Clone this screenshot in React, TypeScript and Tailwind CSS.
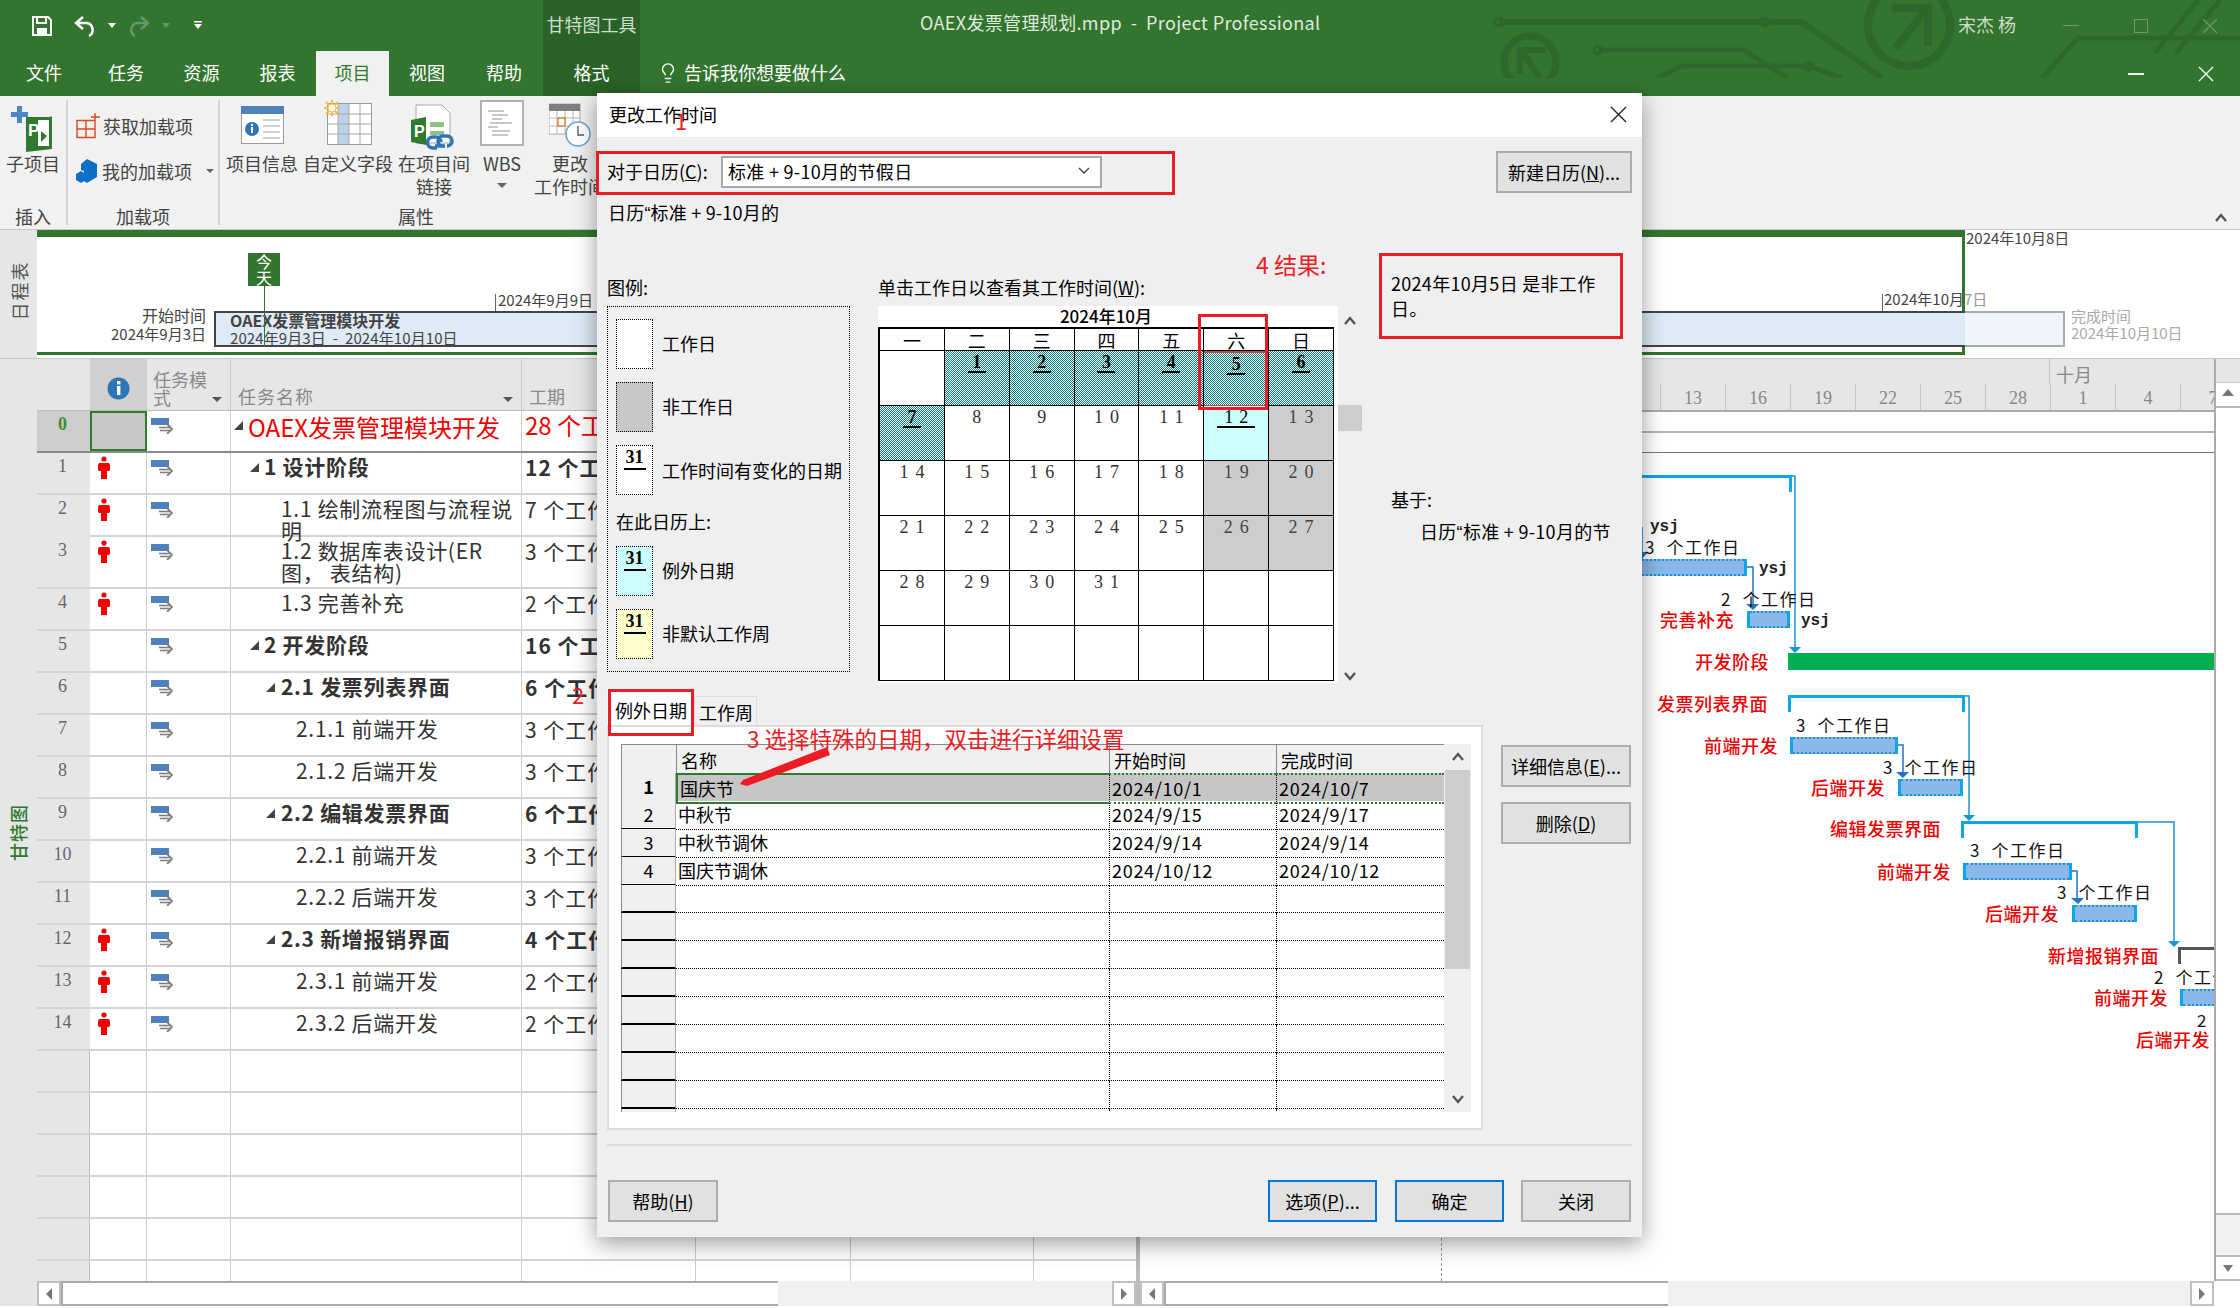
import type { ReactNode } from "react"
import { Lightbulb } from "lucide-react"

const tabs = [
  { label: "文件", cls: "w-[88px]" },
  { label: "任务", cls: "w-[76px]" },
  { label: "资源", cls: "w-[75px]" },
  { label: "报表", cls: "w-[77px]" },
  { label: "项目", cls: "w-[73px] bg-[#f1f1f1] text-[#2f7a2f]" },
  { label: "视图", cls: "w-[76px]" },
  { label: "帮助", cls: "w-[78px]" },
  { label: "格式", cls: "w-[97px] bg-[#2a6328]" },
]

const tasks = [
  { n: "0", name: ["OAEX发票管理模块开发"], dur: "28 个工作日", ind: "pl-[17px]", tri: "left-[3px]", kind: "root", res: false, h: "h-[42px]" },
  { n: "1", name: ["1 设计阶段"], dur: "12 个工作日", ind: "pl-[33px]", tri: "left-[19px]", kind: "bold", res: true, h: "h-[42px]" },
  { n: "2", name: ["1.1 绘制流程图与流程说", "明"], dur: "7 个工作日", ind: "pl-[50px]", kind: "", res: true, h: "h-[42px]" },
  { n: "3", name: ["1.2 数据库表设计(ER", "图\uFF0C 表结构)"], dur: "3 个工作日", ind: "pl-[50px]", kind: "", res: true, h: "h-[52px]" },
  { n: "4", name: ["1.3 完善补充"], dur: "2 个工作日", ind: "pl-[50px]", kind: "", res: true, h: "h-[42px]" },
  { n: "5", name: ["2 开发阶段"], dur: "16 个工作日", ind: "pl-[33px]", tri: "left-[19px]", kind: "bold", res: false, h: "h-[42px]" },
  { n: "6", name: ["2.1 发票列表界面"], dur: "6 个工作日", ind: "pl-[50px]", tri: "left-[35px]", kind: "bold", res: false, h: "h-[42px]" },
  { n: "7", name: ["2.1.1 前端开发"], dur: "3 个工作日", ind: "pl-[65px]", kind: "", res: false, h: "h-[42px]" },
  { n: "8", name: ["2.1.2 后端开发"], dur: "3 个工作日", ind: "pl-[65px]", kind: "", res: false, h: "h-[42px]" },
  { n: "9", name: ["2.2 编辑发票界面"], dur: "6 个工作日", ind: "pl-[50px]", tri: "left-[35px]", kind: "bold", res: false, h: "h-[42px]" },
  { n: "10", name: ["2.2.1 前端开发"], dur: "3 个工作日", ind: "pl-[65px]", kind: "", res: false, h: "h-[42px]" },
  { n: "11", name: ["2.2.2 后端开发"], dur: "3 个工作日", ind: "pl-[65px]", kind: "", res: false, h: "h-[42px]" },
  { n: "12", name: ["2.3 新增报销界面"], dur: "4 个工作日", ind: "pl-[50px]", tri: "left-[35px]", kind: "bold", res: true, h: "h-[42px]" },
  { n: "13", name: ["2.3.1 前端开发"], dur: "2 个工作日", ind: "pl-[65px]", kind: "", res: true, h: "h-[42px]" },
  { n: "14", name: ["2.3.2 后端开发"], dur: "2 个工作日", ind: "pl-[65px]", kind: "", res: true, h: "h-[42px]" },
]

const rowGrid = "grid grid-cols-[53px_57px_84px_291px_174px_155px_183px_102px]"

// gantt canvas, page coordinates minus the pane origin (1140, 359)
const OX = 1140
const OY = 359

const taskBars = [
  { x: 1642, y: 559, w: 105, r: true },
  { x: 1747, y: 611, w: 43, l: true, r: true },
  { x: 1790, y: 737, w: 108, l: true, r: true },
  { x: 1898, y: 779, w: 65, l: true, r: true },
  { x: 1963, y: 863, w: 109, l: true, r: true },
  { x: 2072, y: 905, w: 65, l: true, r: true },
  { x: 2180, y: 989, w: 34, l: true },
]

const summaries = [
  { x: 1642, y: 475, w: 150, dark: false, noLeft: true },
  { x: 1788, y: 695, w: 177, dark: false },
  { x: 1961, y: 821, w: 177, dark: false },
  { x: 2178, y: 947, w: 36, dark: true, noRight: true },
]

const redLabels = [
  { t: "完善补充", x: 1660, y: 619 },
  { t: "开发阶段", x: 1695, y: 661 },
  { t: "发票列表界面", x: 1657, y: 703 },
  { t: "前端开发", x: 1704, y: 745 },
  { t: "后端开发", x: 1811, y: 787 },
  { t: "编辑发票界面", x: 1830, y: 828 },
  { t: "前端开发", x: 1877, y: 871 },
  { t: "后端开发", x: 1985, y: 913 },
  { t: "新增报销界面", x: 2048, y: 955 },
  { t: "前端开发", x: 2094, y: 997 },
  { t: "后端开发", x: 2136, y: 1039 },
]

const blackLabels = [
  { t: "3  个工作日", x: 1645, y: 547 },
  { t: "2  个工作日", x: 1721, y: 599 },
  { t: "3  个工作日", x: 1796, y: 725 },
  { t: "3  个工作日", x: 1883, y: 767 },
  { t: "3  个工作日", x: 1970, y: 850 },
  { t: "3  个工作日", x: 2057, y: 892 },
  { t: "2  个工作日", x: 2154, y: 977 },
  { t: "2", x: 2197, y: 1020 },
]

const ysj = [
  { x: 1650, y: 527 },
  { x: 1759, y: 569 },
  { x: 1801, y: 621 },
]

const exceptions = [
  ["1", "国庆节", "2024/10/1", "2024/10/7"],
  ["2", "中秋节", "2024/9/15", "2024/9/17"],
  ["3", "中秋节调休", "2024/9/14", "2024/9/14"],
  ["4", "国庆节调休", "2024/10/12", "2024/10/12"],
  ["", "", "", ""],
  ["", "", "", ""],
  ["", "", "", ""],
  ["", "", "", ""],
  ["", "", "", ""],
  ["", "", "", ""],
  ["", "", "", ""],
  ["", "", "", ""],
  ["", "", "", ""],
]

type Day = { d: string; kind?: "exc" | "off" | "light" | "sel" }

const calendar: Day[] = [
  { d: "" },
  { d: "1", kind: "exc" }, { d: "2", kind: "exc" }, { d: "3", kind: "exc" }, { d: "4", kind: "exc" }, { d: "5", kind: "sel" }, { d: "6", kind: "exc" },
  { d: "7", kind: "exc" }, { d: "8" }, { d: "9" }, { d: "10" }, { d: "11" }, { d: "12", kind: "light" }, { d: "13", kind: "off" },
  { d: "14" }, { d: "15" }, { d: "16" }, { d: "17" }, { d: "18" }, { d: "19", kind: "off" }, { d: "20", kind: "off" },
  { d: "21" }, { d: "22" }, { d: "23" }, { d: "24" }, { d: "25" }, { d: "26", kind: "off" }, { d: "27", kind: "off" },
  { d: "28" }, { d: "29" }, { d: "30" }, { d: "31" }, { d: "" }, { d: "" }, { d: "" },
  { d: "" }, { d: "" }, { d: "" }, { d: "" }, { d: "" }, { d: "" }, { d: "" },
]

const teal = "bg-[image:repeating-conic-gradient(#008080_0%_25%,#ffffff_0%_50%)] bg-[length:2px_2px]"

function Person() {
  return (
    <svg width="12" height="24" viewBox="0 0 12 24" className="ml-[8px] mt-[3px]">
      <circle cx="6" cy="3" r="2.6" fill="#f00000" />
      <path d="M1 7h10l1 2v5l-1 1H9v8H3v-8H1l-1-1V9z" fill="#f00000" />
    </svg>
  )
}

function ModeIcon() {
  return (
    <svg width="22" height="16" viewBox="0 0 22 16" className="ml-[4px] mt-[7px]">
      <rect x="0" y="0" width="18" height="7" fill="#4f81bd" />
      <path d="M8 9.5h11" stroke="#7f7f7f" strokeWidth="1.6" />
      <path d="M9 12.5h10" stroke="#7f7f7f" strokeWidth="1.6" />
      <path d="M16 6l5 5-5 5" fill="none" stroke="#7f7f7f" strokeWidth="1.8" />
    </svg>
  )
}

function Btn({ children, cls }: { children: ReactNode; cls: string }) {
  return <div className={`flex items-center justify-center h-[42px] bg-[#e1e1e1] border-2 text-[18px] text-black ${cls}`}>{children}</div>
}

function Chevron({ down }: { down?: boolean }) {
  return (
    <svg width="14" height="10" viewBox="0 0 14 10" className="shrink-0">
      <path d={down ? "M2 2l5 6 5-6" : "M2 8l5-6 5 6"} fill="none" stroke="#555" strokeWidth="2.4" />
    </svg>
  )
}

function Swatch({ cls, num }: { cls: string; num?: boolean }) {
  return (
    <div className={`w-[37px] h-[50px] shrink-0 border border-dotted border-black flex justify-center ${cls}`}>
      {num && <span className="h-[24px] leading-[23px] px-[2px] border-b-2 border-black font-['Liberation_Serif',serif] font-bold text-[18px] text-black">31</span>}
    </div>
  )
}

function TitleBar() {
  return (
    <div className="relative shrink-0 h-[96px] bg-[#33752f] text-white">
      <svg width="2240" height="78" viewBox="0 0 2240 78" className="absolute left-0 top-0" fill="none" stroke="#2c682a">
        <path d="M1499 22H1802L1882 78" strokeWidth="6" />
        <circle cx="1499" cy="22" r="4" strokeWidth="3" />
        <circle cx="1765" cy="22" r="4" strokeWidth="3" />
        <circle cx="1909" cy="25" r="41" strokeWidth="8" />
        <path d="M1892 8H1928V46M1926 10L1896 48" strokeWidth="8" />
        <circle cx="1530" cy="62" r="26" strokeWidth="7" />
        <path d="M1546 50H1520V74M1522 52L1540 78" strokeWidth="6" />
        <path d="M1598 50H1744L1787 78" strokeWidth="5" />
        <circle cx="1598" cy="50" r="4" strokeWidth="3" />
        <path d="M1656 78L1682 66H1809L1842 78" strokeWidth="5" />
        <circle cx="1809" cy="66" r="4" strokeWidth="3" />
        <path d="M2042 78L2078 38H2240" strokeWidth="5" />
        <path d="M2155 53L2198 0M2176 53L2220 0" strokeWidth="5" />
      </svg>
      <div className="relative flex h-[51px]">
        <div className="w-[543px] flex items-center pl-[32px]">
          <svg width="20" height="20" viewBox="0 0 20 20" fill="none">
            <path d="M1 1h15l3 3v15H1z" stroke="#fff" strokeWidth="2" />
            <path d="M5 1v6h9V1" stroke="#fff" strokeWidth="2" />
            <rect x="5" y="12" width="10" height="7" fill="#fff" />
          </svg>
          <svg width="22" height="22" viewBox="0 0 22 22" fill="none" className="ml-[22px]">
            <path d="M9 2L2 8l7 6" stroke="#fff" strokeWidth="2.4" />
            <path d="M3 8h10a7 7 0 0 1 2 13" stroke="#fff" strokeWidth="2.4" />
          </svg>
          <svg width="8" height="6" viewBox="0 0 8 6" className="ml-[12px]"><path d="M0 0h8L4 5z" fill="#fff" /></svg>
          <svg width="22" height="22" viewBox="0 0 22 22" fill="none" className="ml-[12px]">
            <path d="M13 2l7 6-7 6" stroke="#64976a" strokeWidth="2.4" />
            <path d="M19 8H9a7 7 0 0 0-2 13" stroke="#64976a" strokeWidth="2.4" />
          </svg>
          <svg width="8" height="6" viewBox="0 0 8 6" className="ml-[12px]"><path d="M0 0h8L4 5z" fill="#64976a" /></svg>
          <svg width="8" height="9" viewBox="0 0 8 9" className="ml-[24px]"><path d="M0 0h8v1.5H0zM0 3h8L4 8z" fill="#fff" /></svg>
        </div>
        <div className="w-[97px] bg-[#2a6328] flex items-center justify-center text-[18px] text-[#cfdccd] pb-[3px]">甘特图工具</div>
        <div className="w-[280px]" />
        <div className="text-[18px] leading-[45px] tracking-[0.35px] text-[#dfe9de] whitespace-pre">OAEX发票管理规划.mpp  -  Project Professional</div>
        <div className="ml-auto mr-[22px] flex items-center">
          <span className="text-[18px] text-[#cfdccd] whitespace-pre pb-[3px]">宋杰 杨</span>
          <span className="ml-[47px] w-[16px] h-px bg-[#6e9b6b]" />
          <span className="ml-[55px] w-[14px] h-[14px] border border-[#6e9b6b]" />
          <svg width="16" height="16" viewBox="0 0 16 16" className="ml-[54px]"><path d="M1 1l14 14M15 1L1 15" stroke="#6e9b6b" strokeWidth="1.2" /></svg>
        </div>
      </div>
      <div className="relative flex h-[45px]">
        {tabs.map((t) => (
          <div key={t.label} className={`flex items-center justify-center text-[18px] pb-[2px] ${t.cls}`}>{t.label}</div>
        ))}
        <div className="ml-[17px] flex items-center text-[18px] gap-[5px] pb-[2px]">
          <Lightbulb size={22} strokeWidth={1.5} />
          告诉我你想要做什么
        </div>
        <div className="ml-auto mr-[26px] flex items-center">
          <span className="w-[16px] h-[2px] bg-[#e8f0e7]" />
          <svg width="16" height="16" viewBox="0 0 16 16" className="ml-[54px]"><path d="M1 1l14 14M15 1L1 15" stroke="#fff" strokeWidth="1.3" /></svg>
        </div>
      </div>
    </div>
  )
}

function RibbonBtn({ cls, icon, lines, caret }: { cls: string; icon: ReactNode; lines: string[]; caret?: boolean }) {
  return (
    <div className={`shrink-0 flex flex-col items-center ${cls}`}>
      <div className="h-[52px] flex items-end justify-center">{icon}</div>
      {lines.map((l) => (
        <div key={l} className="h-[23px] leading-[23px] whitespace-nowrap">{l}</div>
      ))}
      {caret && <svg width="10" height="6" viewBox="0 0 10 6" className="mt-[8px]"><path d="M0 0h10L5 5z" fill="#666" /></svg>}
    </div>
  )
}

function Ribbon() {
  return (
    <div className="shrink-0 h-[134px] bg-[#f1f1f1] border-b border-[#c6c6c6] flex text-[18px] text-[#444]">
      <div className="w-[68px] shrink-0 my-[4px] border-r-2 border-[#d4d4d4] flex flex-col">
        <RibbonBtn
          cls="w-[66px]"
          lines={["子项目"]}
          icon={
            <svg width="44" height="46" viewBox="0 0 44 46">
              <path d="M6 0h5v6h6v5h-6v6H6v-6H0V6h6z" fill="#4a86c8" />
              <path d="M15 11h24a1 1 0 0 1 2 1v31l-26 3z" fill="#2f7a2f" />
              <path d="M27 14h11v26H27z" fill="#fff" />
              <path d="M30 25l6 5-6 6z" fill="#2f7a2f" />
              <text x="17" y="30" fontSize="17" fontWeight="700" fill="#fff" fontFamily="Liberation Sans">P</text>
            </svg>
          }
        />
        <div className="mt-auto h-[24px] leading-[30px] text-center">插入</div>
      </div>
      <div className="w-[152px] shrink-0 my-[4px] border-r-2 border-[#d4d4d4] flex flex-col pl-[8px]">
        <div className="mt-[13px] h-[26px] flex items-center gap-[3px] whitespace-nowrap">
          <svg width="24" height="26" viewBox="0 0 24 26" fill="none" stroke="#d84a1f" strokeWidth="1.4">
            <path d="M1 7.5h18v17H1zM10 7.5v17M1 16h18M19 0v8M15 4h9" />
          </svg>
          获取加载项
        </div>
        <div className="mt-[19px] h-[26px] flex items-center gap-[4px] whitespace-nowrap">
          <svg width="22" height="24" viewBox="0 0 22 24">
            <path d="M11 0l10 5v13l-10 6-3-2V12l-3-1V5z" fill="#0f6fc6" />
            <path d="M5 12l5 3v6l-5 3-5-3v-6z" fill="#0f6fc6" />
          </svg>
          我的加载项
          <svg width="8" height="5" viewBox="0 0 8 5" className="ml-[10px]"><path d="M0 0h8L4 4z" fill="#666" /></svg>
        </div>
        <div className="mt-auto h-[24px] leading-[30px] text-center pr-[8px]">加载项</div>
      </div>
      <div className="w-[392px] shrink-0 my-[4px] flex flex-col">
        <div className="flex">
          <RibbonBtn
            cls="w-[84px]"
            lines={["项目信息"]}
            icon={
              <svg width="43" height="38" viewBox="0 0 43 38" className="mb-[8px]">
                <rect x="0.5" y="0.5" width="42" height="37" fill="#fff" stroke="#9a9a9a" />
                <rect x="0" y="0" width="43" height="8" fill="#4f81bd" />
                <circle cx="11" cy="23" r="7" fill="#2f75b5" />
                <rect x="10" y="21" width="2" height="6" fill="#fff" />
                <rect x="10" y="18" width="2" height="2" fill="#fff" />
                <path d="M22 14h17M22 20h17M22 26h17M22 32h17" stroke="#a0a0a0" />
              </svg>
            }
          />
          <RibbonBtn
            cls="w-[88px]"
            lines={["自定义字段"]}
            icon={
              <svg width="48" height="46" viewBox="0 0 48 46" className="mb-[6px]">
                <rect x="3.5" y="3.5" width="44" height="41" fill="#fff" stroke="#9a9a9a" />
                <rect x="14" y="4" width="11" height="40" fill="#bcd2e8" />
                <path d="M14 4v40M25 4v40M36 4v40M4 14h43M4 24h43M4 34h43" stroke="#a8a8a8" />
                <path d="M8 0v16M0 8h16M2 2l12 12M14 2L2 14" stroke="#f5b948" strokeWidth="2" />
                <circle cx="8" cy="8" r="4" fill="#fff" stroke="#f5b948" />
              </svg>
            }
          />
          <RibbonBtn
            cls="w-[84px]"
            lines={["在项目间", "链接"]}
            icon={
              <svg width="48" height="48" viewBox="0 0 48 48">
                <path d="M6 1h26l8 8v30H6z" fill="#fff" stroke="#a8a8a8" />
                <path d="M1 16l15-3v28L1 38z" fill="#2f7a2f" />
                <text x="4" y="33" fontSize="16" fontWeight="700" fill="#fff" fontFamily="Liberation Sans">P</text>
                <path d="M20 18h14v5H20z" fill="#8fc088" />
                <path d="M20 27h14v4H20z" fill="#8fc088" />
                <path d="M25 42h10M33 42a5 5 0 0 1 0-10h4a5 5 0 0 1 0 10M31 38a5 5 0 0 0-5-5h-3a5 5 0 0 0 0 11h4" fill="none" stroke="#2f75b5" strokeWidth="3.5" />
              </svg>
            }
          />
          <RibbonBtn
            cls="w-[52px]"
            lines={["WBS"]}
            caret
            icon={
              <svg width="44" height="46" viewBox="0 0 44 46" className="mb-[6px]">
                <rect x="1" y="1" width="42" height="44" fill="#fff" stroke="#9a9a9a" strokeWidth="1.5" />
                <path d="M8 11h16M12 15h16M12 19h10M10 23h22M8 27h10M12 31h18M12 35h16" stroke="#b5b5b5" strokeWidth="1.4" />
              </svg>
            }
          />
          <RibbonBtn
            cls="w-[84px]"
            lines={["更改", "工作时间"]}
            icon={
              <svg width="42" height="46" viewBox="0 0 42 46" className="mb-[4px]">
                <rect x="0" y="2" width="31" height="30" fill="#fff" stroke="#a8a8a8" />
                <rect x="0" y="2" width="31" height="7" fill="#7f7f7f" />
                <path d="M8 9v23M16 9v23M24 9v23M0 16h31M0 24h31" stroke="#b5b5b5" />
                <rect x="9" y="16" width="7" height="8" fill="#fff" stroke="#e0762a" strokeWidth="1.3" />
                <circle cx="29" cy="32" r="12" fill="#fff" stroke="#6fa2d8" strokeWidth="1.6" />
                <path d="M29 24v9h6" fill="none" stroke="#555" strokeWidth="1.3" />
              </svg>
            }
          />
        </div>
        <div className="mt-auto h-[24px] leading-[30px] text-center">属性</div>
      </div>
      <div className="ml-auto self-end mb-[6px] mr-[12px]">
        <Chevron />
      </div>
    </div>
  )
}

function TimelineBand() {
  return (
    <div className="shrink-0 h-[129px] flex bg-white border-b border-[#c6c6c6]">
      <div className="w-[37px] shrink-0 bg-[#e6e6e6] flex items-center justify-center pb-[8px]">
        <span className="-rotate-90 whitespace-nowrap text-[18px] text-[#555] tracking-[2px]">日程表</span>
      </div>
      {/* the timeline is a free canvas; its origin is (37, 230) */}
      <div className="relative flex-1 overflow-hidden text-[15px] text-[#444] whitespace-nowrap">
        <div className="absolute left-0 top-0 w-[1928px] h-[125px] border-t-[7px] border-b-[3px] border-r-[3px] border-[#33752f]" />
        <div className="absolute left-[211px] top-[23px] w-[32px] h-[33px] bg-[#33752f] text-white text-[16px] leading-[16px] text-center">
          今<br />天
        </div>
        <div className="absolute left-[169px] top-[76px] text-right leading-[18px] -translate-x-full">
          <span className="text-[16px]">开始时间</span>
          <br />
          2024年9月3日
        </div>
        <div className="absolute left-[177px] top-[81px] w-[1751px] h-[36px] bg-[#deeaf6] border-y-2 border-l-2 border-[#444]" />
        <div className="absolute left-[1928px] top-[81px] w-[100px] h-[36px] bg-[#f0f5fb] border-2 border-l-0 border-[#aaaaaa]" />
        <div className="absolute left-[193px] top-[82px] leading-[17px] whitespace-pre">
          <span className="font-bold text-[16px]">OAEX发票管理模块开发</span>
          <br />
          <span className="tracking-[0.1px]">2024年9月3日  -  2024年10月10日</span>
        </div>
        <div className="absolute left-[227px] top-[56px] w-px h-[61px] bg-[#33752f]" />
        <div className="absolute left-[458px] top-[64px] w-px h-[17px] bg-[#666]" />
        <div className="absolute left-[461px] top-[58px] leading-[24px]">2024年9月9日</div>
        <div className="absolute left-[1845px] top-[64px] w-px h-[17px] bg-[#666]" />
        <div className="absolute left-[1847px] top-[57px] leading-[24px]">
          2024年10月<span className="text-[#999]">7日</span>
        </div>
        <div className="absolute left-[1929px] top-[-4px] leading-[24px]">2024年10月8日</div>
        <div className="absolute left-[2034px] top-[77px] text-[#aaa] leading-[17px]">
          完成时间
          <br />
          2024年10月10日
        </div>
      </div>
    </div>
  )
}

function TaskTable() {
  const empties = [0, 1, 2, 3, 4, 5]
  return (
    <div className="w-[1099px] shrink-0 flex flex-col overflow-hidden">
      <div className={`${rowGrid} h-[52px] shrink-0 bg-[#e6e6e6] text-[18px] text-[#8a8a8a] border-b border-[#bbb]`}>
        <div />
        <div className="bg-[#d0d0d0] border-r border-[#ccc] flex items-center justify-center pt-[8px]">
          <svg width="23" height="23" viewBox="0 0 23 23">
            <circle cx="11.5" cy="11.5" r="11" fill="#2f75b5" />
            <rect x="10" y="9" width="3.4" height="9" fill="#fff" />
            <rect x="10" y="4" width="3.4" height="3.4" fill="#fff" />
          </svg>
        </div>
        <div className="relative border-r border-[#ccc] pl-[6px] pt-[11px] leading-[18px]">
          任务模
          <br />
          式
          <svg width="10" height="6" viewBox="0 0 10 6" className="absolute right-[8px] bottom-[7px]"><path d="M0 0h10L5 5z" fill="#555" /></svg>
        </div>
        <div className="relative border-r border-[#ccc] pl-[7px] pt-[28px] leading-[18px] tracking-[1px]">
          任务名称
          <svg width="10" height="6" viewBox="0 0 10 6" className="absolute right-[8px] bottom-[7px]"><path d="M0 0h10L5 5z" fill="#555" /></svg>
        </div>
        <div className="border-r border-[#ccc] pl-[7px] pt-[28px] leading-[18px]">工期</div>
        <div className="border-r border-[#ccc]" />
        <div className="border-r border-[#ccc]" />
        <div />
      </div>
      {tasks.map((t) => {
        const root = t.kind === "root"
        const bold = t.kind === "bold"
        return (
          <div key={t.n} className={`${rowGrid} ${t.h} shrink-0 border-b-2 ${root ? "border-[#8a8a8a]" : "border-[#d4d4d4]"}`}>
            <div className={`text-center pt-[2px] pr-[2px] leading-[22px] font-['Liberation_Serif',serif] text-[18px] ${root ? "bg-[#cdcdcd] font-bold text-[#3f8f2f]" : "bg-[#e6e6e6] text-[#666]"}`}>{t.n}</div>
            <div className={root ? "bg-[#c8c8c8] border-2 border-[#2f7a2f]" : "border-r border-[#ccc]"}>{t.res && <Person />}</div>
            <div className="border-r border-[#ccc]"><ModeIcon /></div>
            <div className={`relative border-r border-[#ccc] ${t.ind} pt-[2px] leading-[22px] whitespace-nowrap ${root ? "text-[24px] text-[#f00000] leading-[27px]" : "text-[21px] tracking-[0.7px] text-[#333]"} ${bold ? "font-bold text-[#111]" : ""}`}>
              {t.tri && (
                <svg width="9" height="9" viewBox="0 0 9 9" className={`absolute top-[10px] ${t.tri}`}><path d="M9 0v9H0z" fill="#444" /></svg>
              )}
              {t.name.map((l) => <div key={l} className="whitespace-pre">{l}</div>)}
            </div>
            <div className={`border-r border-[#ccc] pl-[3px] pt-[2px] leading-[24px] whitespace-nowrap ${root ? "text-[24px] text-[#f00000]" : "text-[21px] tracking-[1px] text-[#333]"} ${bold ? "font-bold text-[#111]" : ""}`}>{t.dur}</div>
            <div className="border-r border-[#ccc]" />
            <div className="border-r border-[#ccc]" />
            <div />
          </div>
        )
      })}
      {empties.map((i) => (
        <div key={i} className={`${rowGrid} h-[42px] shrink-0 border-b-2 border-[#d4d4d4]`}>
          <div className="bg-[#e6e6e6] border-r border-[#bbb]" />
          <div className="border-r border-[#ccc]" />
          <div className="border-r border-[#ccc]" />
          <div className="border-r border-[#ccc]" />
          <div className="border-r border-[#ccc]" />
          <div className="border-r border-[#ccc]" />
          <div className="border-r border-[#ccc]" />
          <div />
        </div>
      ))}
    </div>
  )
}

function ChartPane() {
  const days = ["13", "16", "19", "22", "25", "28", "1", "4", "7"]
  return (
    <div className="relative w-[1074px] shrink-0 overflow-hidden">
      <div className="h-[53px] bg-[#e6e6e6] border-b-2 border-[#aaa] font-['Liberation_Serif',serif] text-[18px] text-[#888]">
        <div className="h-[25px] ml-[909px] border-l border-[#c4c4c4] pl-[6px] mt-0 pt-[4px] leading-[22px] font-['Noto_Sans_CJK_SC',sans-serif]">十月</div>
        <div className="flex h-[26px] ml-[520px]">
          {days.map((d) => (
            <div key={d} className="w-[65px] shrink-0 border-l border-[#c4c4c4] text-center leading-[28px]">{d}</div>
          ))}
        </div>
      </div>
      <div className="h-[21px] border-b-2 border-[#b5b5b5]" />
      <div className="h-[20px] border-b border-[#777]" />
      <div className="absolute left-[301px] top-[53px] bottom-0 border-l border-dashed border-[#999]" />

      <svg width="1074" height="922" viewBox="1140 359 1074 922" className="absolute left-0 top-0" fill="none">
        <path d="M1790 476H1795V647" stroke="#1b94d6" strokeWidth="1.5" />
        <path d="M1789 647h12l-6 6z" fill="#1b94d6" />
        <path d="M1642 527V560" stroke="#2273c9" strokeWidth="1.5" />
        <path d="M1642 552l6 0-6 7z" fill="#2273c9" />
        <path d="M1747 567H1753V604" stroke="#2273c9" strokeWidth="1.5" />
        <path d="M1746 604h13l-6 6z" fill="#2273c9" />
        <path d="M1897 745H1903V772" stroke="#2273c9" strokeWidth="1.5" />
        <path d="M1896 772h13l-6 6z" fill="#2273c9" />
        <path d="M1964 696H1969V815" stroke="#1b94d6" strokeWidth="1.5" />
        <path d="M1963 815h12l-6 6z" fill="#1b94d6" />
        <path d="M2072 871H2077V898" stroke="#2273c9" strokeWidth="1.5" />
        <path d="M2071 898h13l-6 6z" fill="#2273c9" />
        <path d="M2137 822H2174V941" stroke="#1b94d6" strokeWidth="1.5" />
        <path d="M2168 941h12l-6 6z" fill="#1b94d6" />
      </svg>

      <div className="absolute left-[648px] top-[294px] w-[426px] h-[17px] bg-[#00b050]" />

      {summaries.map((s) => (
        <div
          key={s.x}
          className={`absolute h-[17px] border-t-[3px] ${s.noLeft ? "" : "border-l-[3px]"} ${s.noRight ? "" : "border-r-[3px]"} ${s.dark ? "border-[#555]" : "border-[#0aa5ea]"}`}
          style={{ left: s.x - OX, top: s.y - OY, width: s.w }}
        />
      ))}

      {taskBars.map((b) => (
        <div key={b.x} className="absolute h-[17px] flex bg-[#8ab8e8]" style={{ left: b.x - OX, top: b.y - OY, width: b.w }}>
          {b.l && <div className="w-[3px] bg-[#0aa5ea]" />}
          <div className="flex-1 border-y-2 border-dotted border-[#1a8fe0]" />
          {b.r && <div className="w-[3px] bg-[#0aa5ea]" />}
        </div>
      ))}

      {redLabels.map((l) => (
        <div key={`${l.t}${l.x}`} className="absolute -translate-y-1/2 text-[18px] leading-[22px] font-medium tracking-[0.5px] text-[#f00000] whitespace-nowrap" style={{ left: l.x - OX, top: l.y - OY }}>{l.t}</div>
      ))}
      {blackLabels.map((l) => (
        <div key={`${l.x}${l.y}`} className="absolute -translate-y-1/2 text-[17px] leading-[20px] tracking-[1.5px] text-[#111] whitespace-pre" style={{ left: l.x - OX, top: l.y - OY }}>{l.t}</div>
      ))}
      {ysj.map((l) => (
        <div key={l.x} className="absolute -translate-y-1/2 font-['Liberation_Mono',monospace] text-[16px] leading-[20px] font-bold text-[#222]" style={{ left: l.x - OX, top: l.y - OY }}>ysj</div>
      ))}
    </div>
  )
}

function VScroll() {
  return (
    <div className="w-[26px] shrink-0 flex flex-col border-l-2 border-[#aaa]">
      <div className="h-[24px] bg-[#e6e6e6] border-b border-[#ccc]" />
      <div className="h-[25px] bg-white border-b-2 border-[#b8b8b8] flex items-start justify-center pt-[6px]">
        <svg width="12" height="7" viewBox="0 0 12 7"><path d="M6 0l6 7H0z" fill="#777" /></svg>
      </div>
      <div className="flex-1 bg-white" />
      <div className="h-[44px] bg-[#f1f1f1] border-y-2 border-[#bbb]" />
      <div className="h-[24px] bg-white border-b-2 border-[#bbb] flex items-center justify-center">
        <svg width="10" height="7" viewBox="0 0 10 7"><path d="M5 7L0 0h10z" fill="#777" /></svg>
      </div>
    </div>
  )
}

function HScroll({ cls, thumb }: { cls: string; thumb: string }) {
  return (
    <div className={`flex bg-[#f1f1f1] ${cls}`}>
      <div className="w-[24px] shrink-0 bg-white border-2 border-[#c0c0c0] flex items-center justify-center">
        <svg width="6" height="12" viewBox="0 0 6 12"><path d="M0 6l6-6v12z" fill="#777" /></svg>
      </div>
      <div className={`bg-white border-2 border-r-0 border-[#aaa] ${thumb}`} />
      <div className="w-[24px] shrink-0 ml-auto bg-white border-2 border-[#c0c0c0] flex items-center justify-center">
        <svg width="6" height="12" viewBox="0 0 6 12"><path d="M6 6L0 0v12z" fill="#777" /></svg>
      </div>
    </div>
  )
}

function Dialog() {
  const quote = <span className="font-['Liberation_Sans',sans-serif]">“</span>
  return (
    <div className="absolute left-[597px] top-[93px] w-[1045px] h-[1144px] bg-[#efefef] shadow-[0_6px_22px_rgba(0,0,0,0.4)] flex flex-col text-[18px] text-black">
      <div className="h-[44px] shrink-0 bg-white flex items-center justify-between pl-[12px] pr-[15px] pb-[2px]">
        <span>更改工作时间</span>
        <svg width="17" height="17" viewBox="0 0 17 17"><path d="M1 1l15 15M16 1L1 16" stroke="#222" strokeWidth="1.4" /></svg>
      </div>
      <div className="flex h-[42px] mt-[14px] shrink-0 pl-[10px] pr-[10px]">
        <span className="w-[114px] mt-[4px] h-[32px] leading-[32px] whitespace-nowrap">
          对于日历(<span className="underline">C</span>):
        </span>
        <div className="w-[381px] h-[32px] mt-[5px] bg-white border-2 border-[#a8a8a8] flex items-center justify-between pl-[5px] pr-[10px] pb-[2px] whitespace-pre">
          <span className="tracking-[0.3px]">标准 + 9-10月的节假日</span>
          <svg width="12" height="8" viewBox="0 0 12 8"><path d="M1 1l5 5 5-5" fill="none" stroke="#444" strokeWidth="1.4" /></svg>
        </div>
        <Btn cls="ml-auto w-[136px] border-[#adadad]">
          新建日历(<span className="underline">N</span>)...
        </Btn>
      </div>
      <div className="mt-[7px] ml-[11px] h-[24px] leading-[24px] shrink-0 tracking-[0.2px]">日历{quote}标准 + 9-10月的</div>

      <div className="flex h-[436px] mt-[29px] shrink-0">
        <div className="ml-[10px] w-[243px] shrink-0 pt-[22px]">
          <div className="h-[24px] leading-[24px]">图例:</div>
          <div className="mt-[7px] h-[366px] bg-[#efefef] border border-dotted border-black pl-[8px] pt-[12px] flex flex-col">
            <div className="flex items-center gap-[9px] h-[50px]"><Swatch cls="bg-white" /><span className="pb-[2px]">工作日</span></div>
            <div className="mt-[13px] flex items-center gap-[9px] h-[50px]"><Swatch cls="bg-[#c8c8c8]" /><span className="pb-[2px]">非工作日</span></div>
            <div className="mt-[13px] flex gap-[9px] h-[50px]"><Swatch cls="bg-white" num /><span className="mt-[12px] whitespace-nowrap">工作时间有变化的日期</span></div>
            <div className="mt-[13px] h-[26px] leading-[26px]">在此日历上:</div>
            <div className="mt-[12px] flex items-center gap-[9px] h-[50px]"><Swatch cls="bg-[#ccffff]" num /><span className="pb-[2px]">例外日期</span></div>
            <div className="mt-[13px] flex items-center gap-[9px] h-[50px]"><Swatch cls="bg-[#ffffcc]" num /><span className="pb-[2px]">非默认工作周</span></div>
          </div>
        </div>

        <div className="ml-[28px] w-[460px] shrink-0 pt-[22px]">
          <div className="h-[24px] leading-[24px] whitespace-nowrap">单击工作日以查看其工作时间(<span className="underline">W</span>):</div>
          <div className="mt-[7px] w-[460px] h-[377px] bg-white flex flex-col">
            <div className="h-[21px] leading-[19px] text-center text-[17px] font-medium pr-[4px]">2024年10月</div>
            <div className="w-[456px] grid grid-cols-7 border-t-2 border-l-2 border-black">
              {["一", "二", "三", "四", "五", "六", "日"].map((d) => (
                <div key={d} className="h-[22px] leading-[22px] text-center border-r border-b border-black">{d}</div>
              ))}
              {calendar.map((c, i) => {
                const exc = c.kind === "exc" || c.kind === "sel"
                const under = exc || c.kind === "light"
                return (
                  <div
                    key={i}
                    className={`h-[55px] border-r border-b border-black text-center font-['Liberation_Serif',serif] text-[18px] leading-[22px] ${exc ? teal : ""} ${c.kind === "off" ? "bg-[#cdcdcd]" : ""} ${c.kind === "light" ? "bg-[#ccffff]" : ""} ${c.kind === "sel" ? "border-y-2 border-y-[#c04848]" : ""}`}
                  >
                    {under ? (
                      <span className={`inline-block h-[20px] leading-[19px] border-b-2 border-black text-black ${c.d.length > 1 ? "tracking-[6px] pl-[6px] min-w-[38px]" : "min-w-[18px] font-bold"}`}>{c.d}</span>
                    ) : (
                      <span className={`tracking-[7px] pl-[7px] ${c.kind === "off" ? "text-[#444]" : "text-[#333]"}`}>{c.d}</span>
                    )}
                  </div>
                )
              })}
            </div>
          </div>
        </div>

        <div className="w-[24px] shrink-0 pt-[61px] flex flex-col items-center h-[430px]">
          <div className="h-[14px] flex items-center"><Chevron /></div>
          <div className="mt-[77px] w-[24px] h-[26px] bg-[#cdcdcd]" />
          <div className="mt-auto h-[14px] flex items-center"><Chevron down /></div>
        </div>

        <div className="ml-[17px] w-[244px] shrink-0">
          <div className="h-[86px] border-[3px] border-[#ed1c24] flex flex-col justify-center pl-[9px] leading-[25px] tracking-[0.3px]">
            2024年10月5日 是非工作
            <br />
            日。
          </div>
          <div className="mt-[148px] ml-[12px] h-[24px] leading-[24px]">基于:</div>
          <div className="mt-[8px] ml-[41px] h-[24px] leading-[24px] whitespace-nowrap tracking-[0.3px]">日历{quote}标准 + 9-10月的节</div>
        </div>
      </div>

      <div className="flex ml-[10px] h-[36px] items-end shrink-0">
        <div className="w-[87px] h-[36px] bg-white pl-[8px] pt-[8px] leading-[26px]">例外日期</div>
        <div className="w-[63px] h-[29px] bg-[#f0f0f0] border border-b-0 border-[#dcdcdc] pl-[4px] leading-[30px]">工作周</div>
      </div>
      <div className="flex ml-[10px] shrink-0">
        <div className="w-[876px] h-[405px] bg-white border-2 border-[#dcdcdc] pl-[12px] pt-[17px]">
          <div className="w-[850px] h-[368px] overflow-hidden flex">
            <div className="w-[823px] shrink-0">
              <div className="grid grid-cols-[55px_433px_167px_168px] h-[29px] bg-[#f0f0f0] border-t border-[#888]">
                <div className="border-l border-[#888]" />
                <div className="border-l border-[#888] pl-[4px] leading-[31px]">名称</div>
                <div className="border-l border-[#888] pl-[4px] leading-[31px]">开始时间</div>
                <div className="border-l border-[#888] pl-[4px] leading-[31px]">完成时间</div>
              </div>
              {exceptions.map((r, i) => (
                <div key={i} className={`grid grid-cols-[55px_433px_167px_168px] h-[28px] leading-[27px] ${i === 0 ? "bg-[#c6c6c6]" : ""}`}>
                  <div className={`text-center bg-[#efefef] border-b-2 border-l border-r border-l-[#888] border-r-[#aaa] border-b-black ${i === 0 ? "font-bold" : ""}`}>{r[0]}</div>
                  <div className={`pl-[2px] ${i === 0 ? "border-y-2 border-l-2 border-[#2f7a2f]" : "border-b border-dotted border-black"}`}>{r[1]}</div>
                  <div className={`pl-[2px] tracking-[0.7px] border-l border-dotted border-l-black ${i === 0 ? "border-y-2 border-y-[#2f7a2f]" : "border-b border-b-black"}`}>{r[2]}</div>
                  <div className={`pl-[2px] tracking-[0.7px] border-l border-dotted border-l-black ${i === 0 ? "border-y-2 border-y-[#2f7a2f]" : "border-b border-b-black"}`}>{r[3]}</div>
                </div>
              ))}
            </div>
            <div className="w-[27px] shrink-0 bg-[#f0f0f0] flex flex-col items-center">
              <div className="h-[26px] flex items-center"><Chevron /></div>
              <div className="w-[25px] h-[199px] bg-[#cdcdcd]" />
              <div className="mt-auto mb-[6px] h-[14px] flex items-center"><Chevron down /></div>
            </div>
          </div>
        </div>
        <div className="ml-[18px] mt-[20px] flex flex-col gap-[15px]">
          <Btn cls="w-[130px] border-[#adadad]">详细信息(<span className="underline">E</span>)...</Btn>
          <Btn cls="w-[130px] border-[#adadad]">删除(<span className="underline">D</span>)</Btn>
        </div>
      </div>
      <div className="mt-[14px] mx-[10px] h-[2px] bg-[#dcdcdc] shrink-0" />
      <div className="mt-[34px] ml-[11px] mr-[11px] flex shrink-0">
        <Btn cls="w-[110px] border-[#adadad]">帮助(<span className="underline">H</span>)</Btn>
        <Btn cls="ml-auto w-[109px] border-[#0078d7]">选项(<span className="underline">P</span>)...</Btn>
        <Btn cls="ml-[18px] w-[109px] border-[#0078d7]">确定</Btn>
        <Btn cls="ml-[17px] w-[110px] border-[#adadad]">关闭</Btn>
      </div>
    </div>
  )
}

function Annotations() {
  return (
    <>
      <div className="absolute left-[596px] top-[151px] w-[579px] h-[44px] border-[3px] border-[#ed1c24]" />
      <div className="absolute left-[1198px] top-[314px] w-[70px] h-[96px] border-[3px] border-[#ed1c24]" />
      <div className="absolute left-[608px] top-[689px] w-[86px] h-[47px] border-[3px] border-[#ed1c24]" />
      <div className="absolute left-[675px] top-[108px] text-[22px] leading-[24px] text-[#ed1c24]">1</div>
      <div className="absolute left-[572px] top-[682px] text-[22px] leading-[24px] text-[#ed1c24]">2</div>
      <div className="absolute left-[1256px] top-[250px] text-[23px] leading-[28px] text-[#ed1c24] whitespace-pre">4 结果:</div>
      <div className="absolute left-[747px] top-[724px] text-[22.5px] leading-[28px] text-[#ed1c24] whitespace-nowrap">{"3 选择特殊的日期\uFF0C双击进行详细设置"}</div>
      <svg width="100" height="45" viewBox="0 0 100 45" className="absolute left-[735px] top-[745px]">
        <path d="M92 2l3 8L12 41l-7-2 3-4z" fill="#ed1c24" />
      </svg>
    </>
  )
}

export default function App() {
  return (
    <div className="relative w-[2240px] h-[1308px] overflow-hidden bg-white flex flex-col font-['Noto_Sans_CJK_SC',sans-serif]">
      <TitleBar />
      <Ribbon />
      <TimelineBand />
      <div className="h-[922px] shrink-0 flex">
        <div className="w-[37px] shrink-0 bg-[#e6e6e6] flex items-center justify-center pt-[24px]">
          <span className="-rotate-90 whitespace-nowrap text-[18px] text-[#2f7a2f] tracking-[1px] font-medium">甘特图</span>
        </div>
        <TaskTable />
        <div className="w-[4px] shrink-0 bg-[#bbb]" />
        <ChartPane />
        <VScroll />
      </div>
      <div className="h-[25px] shrink-0 flex bg-white">
        <div className="w-[37px] shrink-0 bg-[#e6e6e6]" />
        <HScroll cls="w-[1099px]" thumb="w-[717px]" />
        <div className="w-[4px] shrink-0 bg-[#bbb]" />
        <HScroll cls="w-[1074px]" thumb="w-[504px]" />
      </div>
      <Dialog />
      <Annotations />
    </div>
  )
}
